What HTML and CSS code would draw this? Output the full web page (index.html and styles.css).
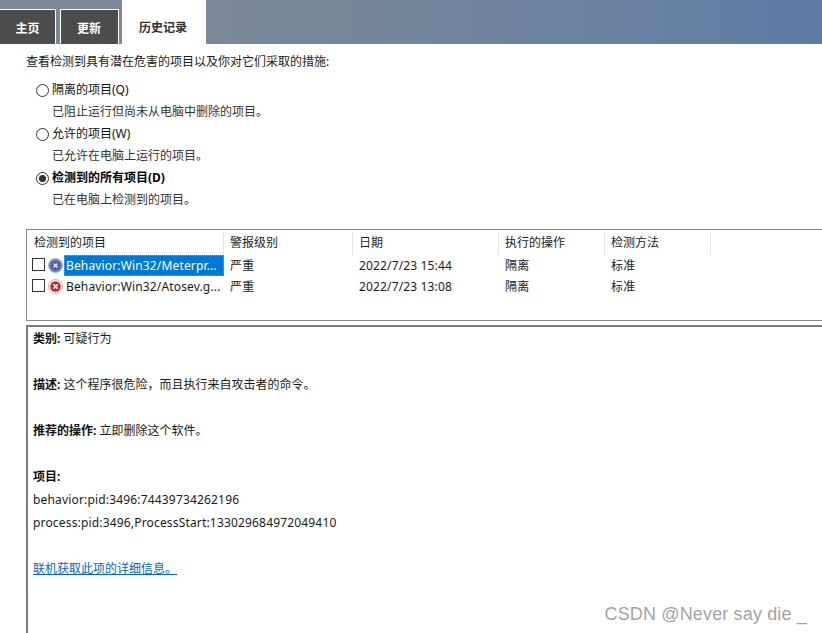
FILE: index.html
```html
<!DOCTYPE html>
<html lang="zh-CN">
<head>
  <meta charset="UTF-8" />
  <meta name="viewport" content="width=device-width, initial-scale=1.0" />
  <title>历史记录</title>
  <link rel="stylesheet" href="styles.css">
</head>
<body>

  <div class="tabbar">
    <div class="tab">主页</div>
    <div class="tab tab-wide">更新</div>
    <div class="tab-active">历史记录</div>
  </div>

  <div class="intro">查看检测到具有潜在危害的项目以及你对它们采取的措施:</div>

  <div class="options">
    <div class="option">
      <div class="option-row"><span class="radio"></span>隔离的项目(Q)</div>
      <div class="option-desc">已阻止运行但尚未从电脑中删除的项目。</div>
    </div>
    <div class="option">
      <div class="option-row"><span class="radio"></span>允许的项目(W)</div>
      <div class="option-desc">已允许在电脑上运行的项目。</div>
    </div>
    <div class="option">
      <div class="option-row selected"><span class="radio radio-on"></span>检测到的所有项目(D)</div>
      <div class="option-desc">已在电脑上检测到的项目。</div>
    </div>
  </div>

  <div class="list">
    <div class="list-head">
      <div class="col col-name">检测到的项目</div>
      <div class="col col-level">警报级别</div>
      <div class="col col-date">日期</div>
      <div class="col col-action">执行的操作</div>
      <div class="col col-method">检测方法</div>
    </div>
    <div class="list-row">
      <div class="cell-name">
        <span class="check"></span>
        <svg class="threat" viewBox="0 0 16 16">
          <circle cx="8" cy="8" r="8" fill="#9db5d8"/>
          <circle cx="8" cy="8" r="6.8" fill="#5f82bd"/>
          <circle cx="8" cy="8" r="5" fill="#5b55a5"/>
          <path d="M6 6l4 4M10 6l-4 4" stroke="#e4e2f2" stroke-width="1.6"/>
        </svg>
        <span class="name name-selected">Behavior:Win32/Meterpr...</span>
      </div>
      <div class="cell cell-level">严重</div>
      <div class="cell cell-date">2022/7/23 15:44</div>
      <div class="cell cell-action">隔离</div>
      <div class="cell cell-method">标准</div>
    </div>
    <div class="list-row">
      <div class="cell-name">
        <span class="check"></span>
        <svg class="threat" viewBox="0 0 16 16">
          <circle cx="8" cy="8" r="8" fill="#bdbdbd"/>
          <circle cx="8" cy="8" r="7" fill="#f4f4f4"/>
          <circle cx="8" cy="8" r="5.6" fill="#d21f2e"/>
          <path d="M5.8 5.8l4.4 4.4M10.2 5.8l-4.4 4.4" stroke="#fff" stroke-width="1.8"/>
        </svg>
        <span class="name">Behavior:Win32/Atosev.g...</span>
      </div>
      <div class="cell cell-level">严重</div>
      <div class="cell cell-date">2022/7/23 13:08</div>
      <div class="cell cell-action">隔离</div>
      <div class="cell cell-method">标准</div>
    </div>
  </div>

  <div class="details">
    <p class="line"><b>类别:</b> 可疑行为</p>
    <p class="line gap"><b>描述:</b> 这个程序很危险，而且执行来自攻击者的命令。</p>
    <p class="line gap"><b>推荐的操作:</b> 立即删除这个软件。</p>
    <p class="line gap"><b>项目:</b></p>
    <p class="line latin">behavior:pid:3496:74439734262196</p>
    <p class="line latin">process:pid:3496,ProcessStart:133029684972049410</p>
    <p class="line gap"><a href="#">联机获取此项的详细信息。</a></p>
  </div>

  <div class="watermark">CSDN @Never say die _</div>

</body>
</html>
```

FILE: styles.css
```css
html, body {
  height: 100%;
}
body {
  margin: 0;
  height: 633px;
  overflow: hidden;
  position: relative;
  background: #fff;
  color: #1a1a1a;
  font-family: "Noto Sans", "Noto Sans CJK SC", sans-serif;
  font-size: 12px;
}
.tabbar {
  display: flex;
  align-items: flex-end;
  height: 44px;
  background: linear-gradient(90deg, #7b8898 25%, #6b83a0 70%, #5e7ba5 100%);
}
.tab {
  width: 56px;
  height: 35px;
  margin-right: 4px;
  box-sizing: border-box;
  border: 1px solid #fff;
  border-bottom: none;
  border-left: none;
  background: #4c4c4c;
  color: #fff;
  font-weight: 700;
  line-height: 37px;
  text-align: center;
}
.tab-wide {
  width: 59px;
  padding-right: 1px;
  border-left: 1px solid #fff;
  margin-right: 3px;
}
.tab-active {
  width: 84px;
  height: 44px;
  box-sizing: border-box;
  padding-right: 2px;
  background: #fff;
  color: #333;
  font-weight: 700;
  line-height: 56px;
  text-align: center;
}
.intro {
  margin: 9px 0 0 26px;
  line-height: 18px;
}
.options {
  margin: 10px 0 0 36px;
}
.option {
  height: 44px;
}
.option-row {
  display: flex;
  align-items: center;
  height: 18px;
  line-height: 18px;
  color: #111;
}
.selected {
  font-weight: 700;
  color: #000;
}
.radio {
  width: 11px;
  height: 11px;
  margin-right: 3px;
  border: 1px solid #333;
  border-radius: 50%;
  display: flex;
  align-items: center;
  justify-content: center;
}
.radio-on::after {
  content: "";
  width: 7px;
  height: 7px;
  border-radius: 50%;
  background: #333;
}
.option-desc {
  margin: 4px 0 0 16px;
  line-height: 18px;
  color: #333;
}
.list {
  margin: 16px 0 0 26px;
  height: 90px;
  border: 1px solid #86868e;
  border-right: none;
}
.list-head {
  display: flex;
  height: 24px;
  margin-top: 1px;
}
.col {
  box-sizing: border-box;
  padding-left: 6px;
  line-height: 23px;
  border-right: 1px solid #e5e5e5;
  color: #222;
}
.col-name { width: 197px; padding-left: 7px; }
.col-level { width: 129px; }
.col-date { width: 146px; }
.col-action { width: 106px; }
.col-method { width: 106px; }
.list-row {
  display: flex;
  height: 21px;
  line-height: 21px;
  letter-spacing: 0.15px;
}
.cell-name {
  width: 197px;
  display: flex;
  align-items: center;
  flex: none;
}
.check {
  width: 11px;
  height: 11px;
  margin: 0 0 2px 5px;
  border: 1px solid #333;
  flex: none;
}
.threat {
  width: 15px;
  height: 15px;
  margin: 0 0 1px 3px;
  flex: none;
}
.name {
  width: 160px;
  height: 21px;
  margin-left: 1px;
  padding-left: 2px;
  box-sizing: border-box;
  white-space: nowrap;
  overflow: hidden;
}
.name-selected {
  background: #0078d7;
  color: #fff;
  outline: 1px dotted #e08a2c;
  outline-offset: -1px;
}
.cell {
  box-sizing: border-box;
  padding-left: 6px;
  flex: none;
}
.cell-level { width: 129px; }
.cell-date { width: 146px; }
.cell-action { width: 106px; }
.cell-method { width: 106px; }
.details {
  margin: 4px 0 0 26px;
  height: 320px;
  padding: 0 0 0 5px;
  border: 2px solid #7d7d7d;
  border-right: none;
  border-bottom: none;
}
.line {
  margin: 0;
  line-height: 24px;
  height: 23px;
}
.latin {
  letter-spacing: 0.17px;
}
.gap {
  margin-top: 23px;
}
b {
  color: #111;
}
a {
  color: #0066cc;
}
.watermark {
  position: absolute;
  right: 15px;
  bottom: 8px;
  font-family: "Liberation Sans", sans-serif;
  font-size: 18px;
  letter-spacing: 0.15px;
  color: rgba(120, 120, 120, 0.7);
}
```
